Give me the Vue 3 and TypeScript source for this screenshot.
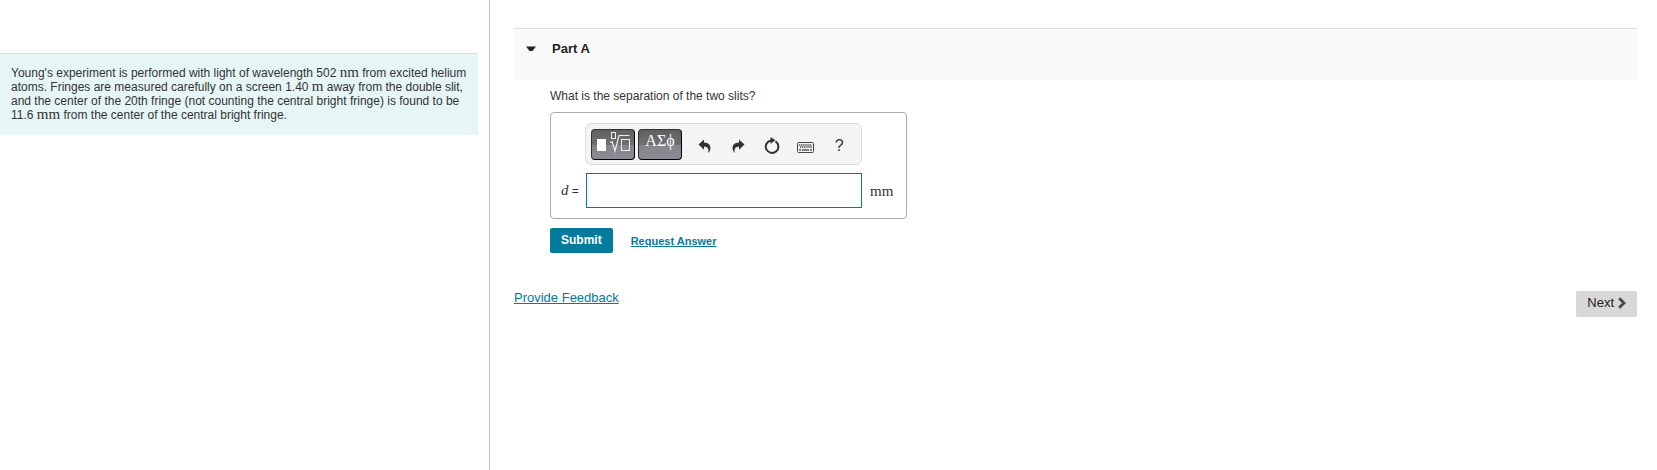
<script setup lang="ts">
import { ref } from 'vue'

const answer = ref('')
const open = ref(true)
</script>

<template>
  <div class="page">
    <aside class="problem">
      <p class="statement">
        Young's experiment is performed with light of wavelength 502 <span class="unit">nm</span> from excited helium
        atoms. Fringes are measured carefully on a screen 1.40 <span class="unit">m</span> away from the double slit,
        and the center of the 20th fringe (not counting the central bright fringe) is found to be
        11.6 <span class="unit">mm</span> from the center of the central bright fringe.
      </p>
    </aside>

    <main class="work">
      <header class="part-head">
        <button class="part-toggle" type="button" :aria-expanded="open" @click="open = !open">
          <svg class="caret" width="10" height="6" viewBox="0 0 10 6" aria-hidden="true">
            <path d="M0 0.5h10L6.500 5H3.500z" fill="#222" />
          </svg>
          <span>Part A</span>
        </button>
      </header>

      <section v-if="open" class="part-body">
        <p class="question">What is the separation of the two slits?</p>

        <form class="answer-form" @submit.prevent>
          <div class="answer-box">
            <div class="toolbar" role="toolbar" aria-label="Equation tools">
              <button class="palette" type="button" aria-label="Templates">
                <svg width="36" height="22" viewBox="0 0 36 22" aria-hidden="true">
                  <rect x="2" y="8" width="9" height="12" fill="#fff" />
                  <rect x="16.500" y="1.500" width="4" height="6" fill="none" stroke="#eee" />
                  <path d="M15 11.500l2-1 3 9.500L24 4.500H34.500" fill="none" stroke="#eee" stroke-width="1.200" />
                  <rect x="26.500" y="8.500" width="8" height="11" fill="none" stroke="#eee" />
                </svg>
              </button>
              <button class="palette greek" type="button" aria-label="Symbols">ΑΣϕ</button>
              <button class="tool undo" type="button" aria-label="Undo">
                <svg width="14" height="14" viewBox="0 0 14 14" aria-hidden="true">
                  <path d="M0.500 5.500L6 0.500V3.500C11 3.500 13 6.500 12.300 10.500L11 13.500H10.300C11 9.500 9.500 7.800 6 7.800V10.800Z" fill="#333" />
                </svg>
              </button>
              <button class="tool" type="button" aria-label="Redo">
                <svg width="14" height="14" viewBox="0 0 14 14" aria-hidden="true">
                  <path d="M13.500 5.500L8 0.500V3.500C3 3.500 1 6.500 1.700 10.500L3 13.500H3.700C3 9.500 4.500 7.800 8 7.800V10.800Z" fill="#333" />
                </svg>
              </button>
              <button class="tool" type="button" aria-label="Reset">
                <svg width="16" height="18" viewBox="0 0 16 18" aria-hidden="true">
                  <path d="M11.500 4.300A6.300 6.300 0 1 1 7 3.400" fill="none" stroke="#333" stroke-width="2" />
                  <path d="M6.500 0L11.500 3.300L6.500 6.800Z" fill="#333" />
                </svg>
              </button>
              <button class="tool" type="button" aria-label="Keyboard shortcuts">
                <svg class="keys" width="18" height="12" viewBox="0 0 18 12" aria-hidden="true">
                  <rect x="0.500" y="0.500" width="16" height="10" rx="1" fill="#f4f4f4" stroke="#444" />
                  <path d="M2 3h13M3 5h12" stroke="#444" stroke-width="1.400" stroke-dasharray="1.300 0.800" />
                  <path d="M2 8h2M5 8h7M13 8h2" stroke="#555" stroke-width="1.400" />
                </svg>
              </button>
              <button class="tool help" type="button" aria-label="Help">?</button>
            </div>
            <label class="symbol" for="answer"><i>d</i> =</label>
            <input id="answer" v-model="answer" class="entry" type="text" autocomplete="off" />
            <span class="unit suffix">mm</span>
          </div>

          <div class="actions">
            <button class="submit" type="submit">Submit</button>
            <a class="request" href="#">Request Answer</a>
          </div>
        </form>
      </section>

      <footer class="foot">
        <a class="feedback" href="#">Provide Feedback</a>
        <button class="next" type="button">
          Next
          <svg width="8" height="12" viewBox="0 0 8 12" aria-hidden="true">
            <path d="M1.200 1.200L6 6L1.200 10.800" fill="none" stroke="#484848" stroke-width="2.800" />
          </svg>
        </button>
      </footer>
    </main>
  </div>
</template>

<style>
body {
  margin: 0;
  background: #fff;
}
</style>

<style scoped>
.page {
  display: grid;
  grid-template-columns: 490px minmax(0, 1fr);
  min-height: 100vh;
  font-family: "Liberation Sans", Arial, sans-serif;
  font-size: 12px;
  line-height: 14px;
  color: #333;
}

button {
  margin: 0;
  padding: 0;
  border: 0;
  background: none;
  font: inherit;
  color: inherit;
  cursor: pointer;
}

a {
  color: #047a9c;
}

.problem {
  box-sizing: border-box;
  padding: 53px 11px 0 0;
  border-right: 1px solid #bcc3cf;
}

.statement {
  margin: 0;
  padding: 12px 0 13px 11px;
  border-top: 1px solid #ddd;
  background: #e6f5f6;
}

.unit {
  font-family: "Liberation Serif", "Times New Roman", serif;
  font-size: 15px;
  line-height: 0;
}

.work {
  padding: 28px 20px 0 24px;
}

.part-head {
  box-sizing: border-box;
  height: 52px;
  padding: 12px;
  border-top: 1px solid #ddd;
  background: #f9f9f9;
}

.part-toggle {
  display: flex;
  align-items: center;
  gap: 16px;
  font-size: 13px;
  font-weight: bold;
  line-height: 16px;
  color: #222;
}

.part-body {
  padding: 9px 0 0 36px;
}

.question {
  margin: 0 0 9px;
}

.answer-box {
  display: grid;
  grid-template-columns: 25px 276px auto;
  row-gap: 8px;
  align-items: center;
  box-sizing: border-box;
  width: max-content;
  padding: 10px 13px 10px 10px;
  border: 1px solid #aaa;
  border-radius: 4px;
}

.toolbar {
  grid-column: 2;
  display: flex;
  align-items: center;
  box-sizing: border-box;
  height: 42px;
  margin-left: -1px;
  padding: 0 5px;
  border: 1px solid #ddd;
  border-radius: 6px;
  background: #f4f4f4;
}

.palette {
  display: flex;
  flex: none;
  align-items: flex-start;
  justify-content: center;
  box-sizing: border-box;
  width: 44px;
  height: 31px;
  margin-right: 3px;
  padding-top: 1px;
  border: 1px solid #333;
  border-right: 1px solid #000;
  border-bottom: 1px solid #000;
  border-radius: 4px;
  background: linear-gradient(#606062 0%, #707072 50%, #84848c 52%, #8c8c94 100%);
  color: #fff;
}

.greek {
  font-family: "Liberation Serif", "Times New Roman", serif;
  font-size: 16px;
  line-height: 20px;
}

.tool {
  display: flex;
  align-items: center;
  justify-content: center;
  width: 34px;
  height: 34px;
  padding-top: 4px;
}

.undo {
  margin-left: 3px;
}

.keys {
  margin-top: 3px;
}

.help {
  font-size: 16px;
  line-height: 18px;
}

.symbol {
  grid-column: 1;
  white-space: nowrap;
}

.symbol i {
  font-family: "Liberation Serif", "Times New Roman", serif;
  font-size: 15px;
}

.entry {
  box-sizing: border-box;
  width: 100%;
  height: 35px;
  padding: 0 6px;
  border: 1px solid #047a9c;
  outline: none;
  background: #fff;
  font: inherit;
  color: inherit;
}

.suffix {
  padding-left: 8px;
}

.actions {
  display: flex;
  align-items: center;
  gap: 18px;
  margin-top: 9px;
}

.submit {
  height: 25px;
  padding: 0 11px 2px;
  border-radius: 2px;
  background: #047a9c;
  font-size: 12px;
  font-weight: bold;
  color: #fff;
}

.request {
  font-size: 11px;
  font-weight: bold;
  line-height: 12px;
}

.foot {
  display: flex;
  align-items: flex-start;
  justify-content: space-between;
  margin-top: 38px;
}

.feedback {
  font-size: 13px;
}

.next {
  display: flex;
  align-items: center;
  gap: 4px;
  height: 26px;
  padding: 0 11px 3px;
  border-radius: 2px;
  background: #d8d8d8;
  font-size: 13px;
  color: #222;
}
</style>
